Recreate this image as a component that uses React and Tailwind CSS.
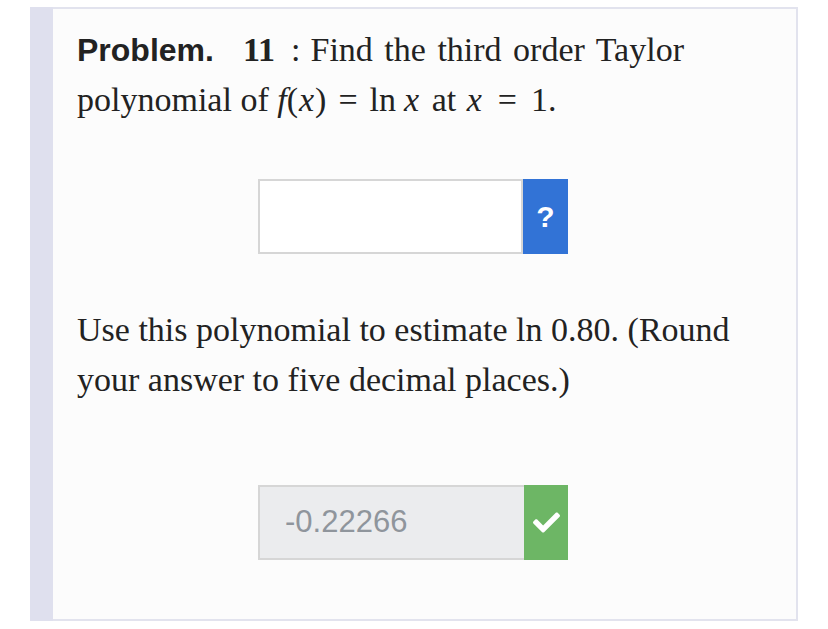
import { FaCheck } from "react-icons/fa";

const serif = { fontFamily: '"Liberation Serif", "DejaVu Serif", serif' };
const sans = { fontFamily: '"Liberation Sans", Arial, sans-serif' };

const App = () => {
  return (
    <div className="min-h-screen bg-white pt-[7px] pl-[30px]">
      <div className="flex w-[768px] h-[614px]">
        <div className="w-[23px] bg-[#dfe0ee]" />
        <div className="flex-1 border-2 border-l-0 border-[#e2e3ee] bg-[#fcfcfc] pl-[24px] pt-[16px]">
          <p className="text-[34px] leading-[50px] text-[#222]" style={serif}>
            <span className="font-bold text-[32px] mr-[29px]" style={sans}>
              Problem.
            </span>
            <span className="font-bold">11</span>
            <span className="ml-[16px] mr-[10px]">:</span>
            <span className="[word-spacing:3px]">Find the third order Taylor</span>
            <br />
            polynomial of <i>f</i>(<i className="mx-[1px]">x</i>)
            <span className="mx-[12px]">=</span>ln
            <i className="ml-[8px] mr-[4px]">x</i> at <i className="mx-[2px]">x</i>
            <span className="mx-[14px]">=</span>1.
          </p>

          <div className="flex ml-[181px] mt-[54px] h-[75px] w-[310px]">
            <div className="flex-1 border-2 border-[#d6d6d6] bg-white" />
            <div className="w-[45px] bg-[#3273d6] flex items-center justify-center text-white font-black text-[30px]" style={sans}>
              ?
            </div>
          </div>

          <p className="mt-[51px] text-[34px] leading-[50px] text-[#222]" style={serif}>
            Use this polynomial to estimate ln 0.80. (Round
            <br />
            your answer to five decimal places.)
          </p>

          <div className="flex ml-[181px] mt-[80px] h-[75px] w-[310px]">
            <div className="flex-1 border-2 border-r-0 border-[#d6d6d6] bg-[#ebecee] flex items-center pl-[25px] text-[31px] text-[#8f959c]" style={sans}>
              -0.22266
            </div>
            <div className="w-[44px] bg-[#6db665] flex items-center justify-center text-white">
              <FaCheck size={27} />
            </div>
          </div>
        </div>
      </div>
    </div>
  );
};

export default App;
